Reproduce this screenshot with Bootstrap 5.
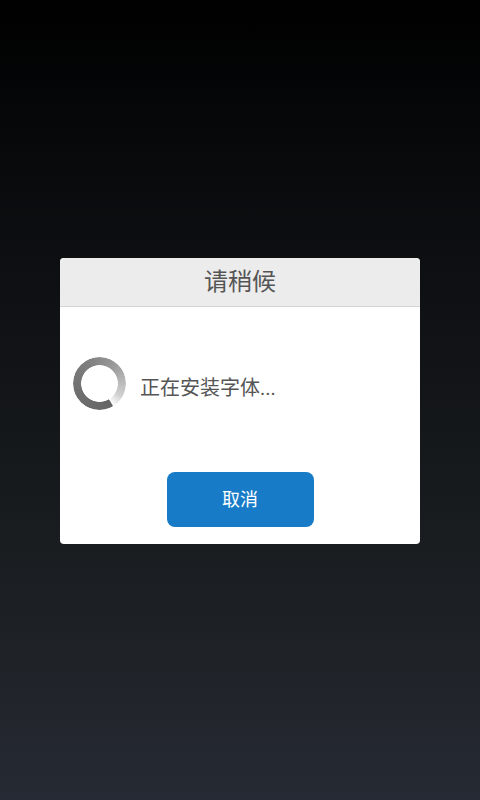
<!DOCTYPE html>
<html lang="zh">
<head>
<meta charset="utf-8">
<title>请稍候</title>
<link href="https://cdn.jsdelivr.net/npm/bootstrap@5.3.0/dist/css/bootstrap.min.css" rel="stylesheet">
<style>
html,body{height:100%}
body{width:480px;height:800px;overflow:hidden;background:linear-gradient(180deg,#000 0%,#0a0c0e 25%,#15181b 55%,#1e2125 80%,#262a34 100%);font-family:"Roboto","Noto Sans CJK SC",sans-serif}
.dlg-box{width:360px;height:286px;margin:258px 0 0 60px;background:#fff;border-radius:4px;overflow:hidden;border:0}
.dlg-head{height:49px;background:#ececec;border-bottom:1px solid #d4d4d4;color:#555;font-size:24px;line-height:48px}
.dlg-body{padding:50px 0 0 13px;height:165px;gap:14px;color:#555;font-size:20px}
.dlg-ring{width:53px;height:53px;border-radius:50%;background:conic-gradient(from 150deg,#656565 0deg,#6e6e6e 90deg,#7e7e7e 180deg,#9a9a9a 250deg,#d0d0d0 330deg,#fbfbfb 358deg,#656565 360deg);-webkit-mask:radial-gradient(circle,transparent 18px,#000 18.7px);mask:radial-gradient(circle,transparent 18px,#000 18.7px)}
.dlg-btn{width:147px;height:55px;background:#187bc7;border:0;border-radius:8px;color:#fff;font-size:18px;padding:0}
.dlg-btn:hover{background:#187bc7;color:#fff}
</style>
</head>
<body>
<div class="card dlg-box">
  <div class="dlg-head text-center">请稍候</div>
  <div class="dlg-body d-flex align-items-start">
    <div class="dlg-ring flex-shrink-0"></div>
    <div class="align-self-start mt-3">正在安装字体...</div>
  </div>
  <div class="d-flex justify-content-center">
    <button type="button" class="btn dlg-btn">取消</button>
  </div>
</div>
<script src="https://cdn.jsdelivr.net/npm/bootstrap@5.3.0/dist/js/bootstrap.bundle.min.js"></script>
</body>
</html>
